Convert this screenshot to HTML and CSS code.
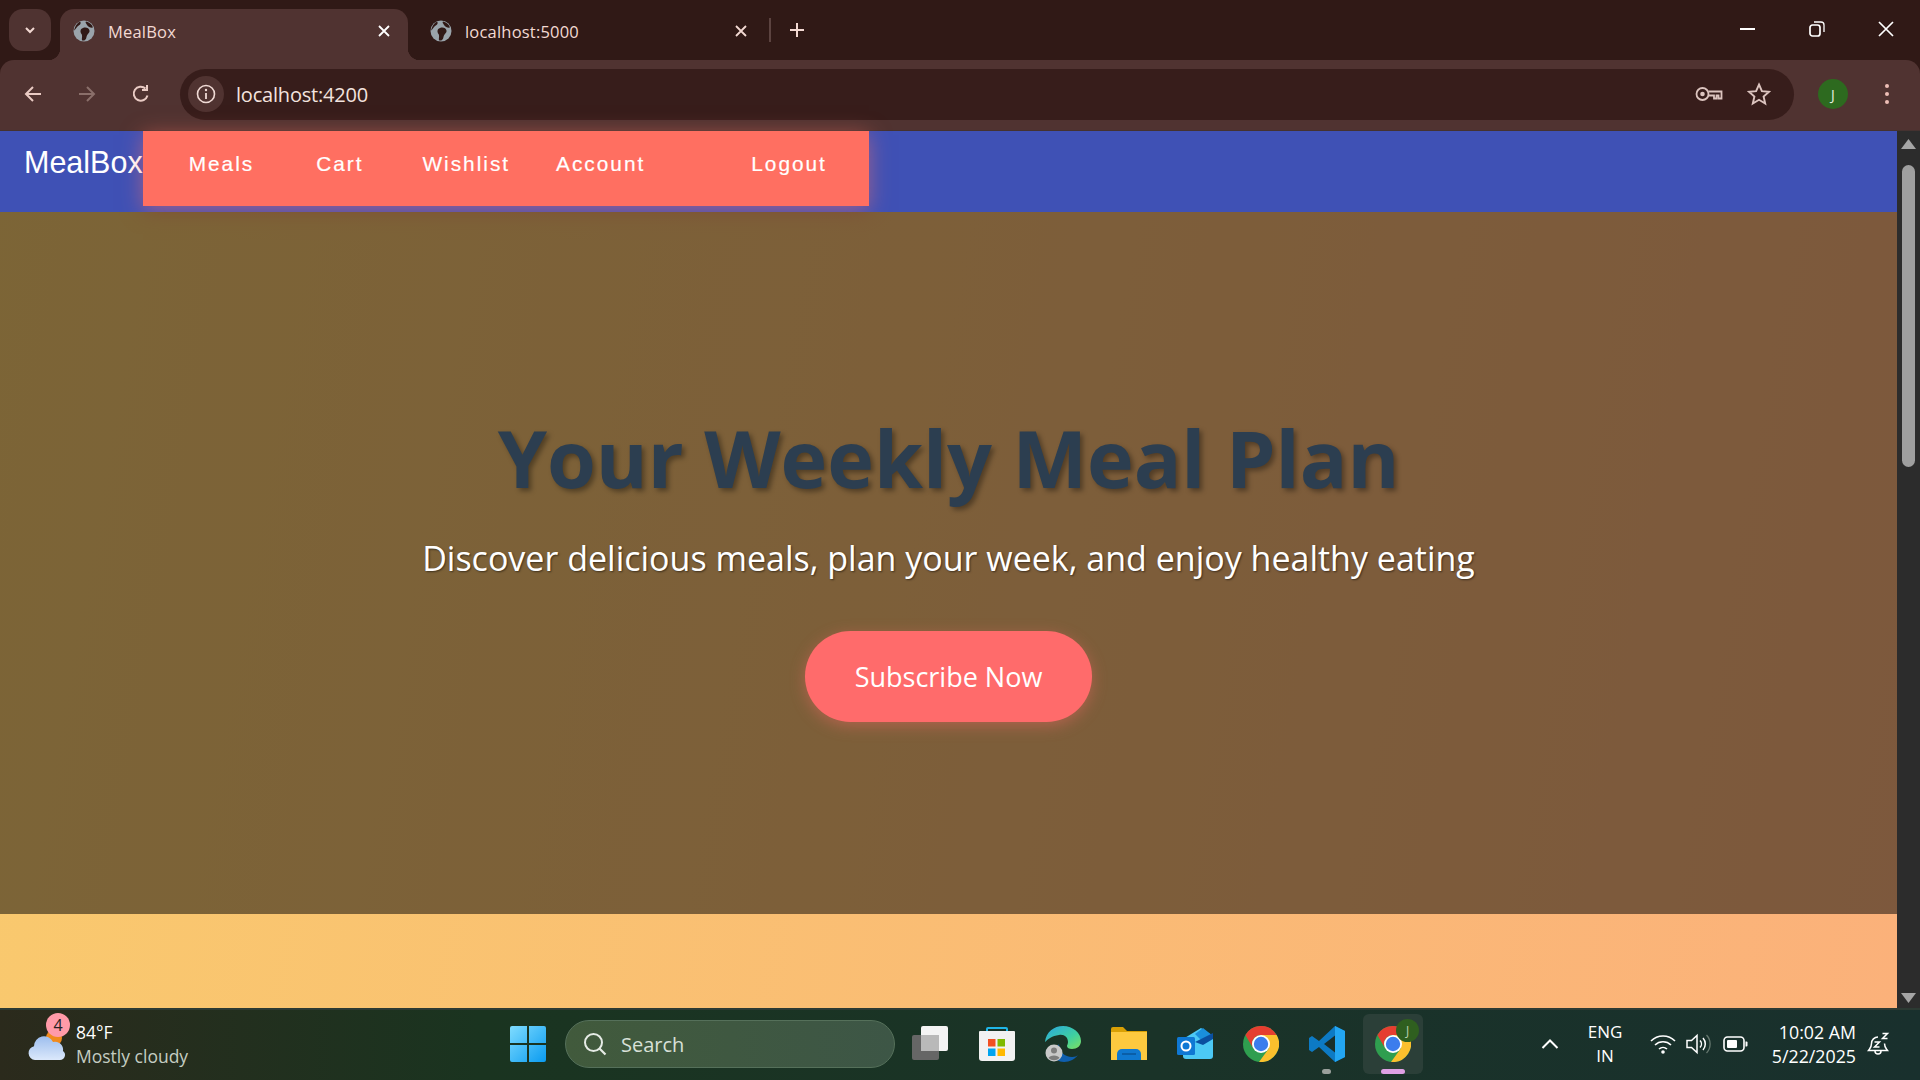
FILE: index.html
```html
<!DOCTYPE html>
<html lang="en">
  <head>
    <meta charset="UTF-8" />
    <title>MealBox</title>
    <link rel="stylesheet" href="styles.css">
  </head>
  <body>
    <svg class="defs" width="0" height="0">
      <symbol id="globe" viewBox="0 0 22 22">
        <circle cx="11" cy="11" r="10.5" fill="#9aa4ab" />
        <path d="M7 1.500C9 4 6 5 4.500 6.500S2 10 1 10.500C2 6 4 3 7 1.500ZM10 8c3-1 6 0 6.500 2.500S14 14 13.500 17 11 21 9.500 20.500 10 16 8.500 14 7 9 10 8ZM13 1.500c3 .5 6 3 7 6-2 .5-5-.5-6-2.500s-2-2.500-1-3.500Z" fill="#301916" />
      </symbol>
      <symbol id="chrome" viewBox="0 0 36 36">
        <circle cx="18" cy="18" r="18" fill="#2f9e4f" />
        <path d="M18 9H33.600A18 18 0 0 1 16 35.900L25.800 22.500Z" fill="#fbc02d" />
        <path d="M2.400 9L10.200 22.500A9 9 0 0 1 18 9H33.600A18 18 0 0 0 2.400 9Z" fill="#e53e30" />
        <circle cx="18" cy="18" r="9" fill="#fff" />
        <circle cx="18" cy="18" r="7.200" fill="#3b7ded" />
      </symbol>
    </svg>

    <div class="tabstrip">
      <button class="tab-search">
        <svg width="14" height="14" viewBox="0 0 14 14"><path d="M3 5l4 4 4-4" fill="none" stroke="#f3d9d3" stroke-width="2" /></svg>
      </button>
      <div class="tab tab-active">
        <svg class="favicon"><use href="#globe" /></svg>
        <span class="tab-title">MealBox</span>
        <svg class="tab-close" width="12" height="12" viewBox="0 0 12 12"><path d="M1 1l10 10M11 1L1 11" stroke="#fff" stroke-width="1.800" /></svg>
      </div>
      <div class="tab">
        <svg class="favicon"><use href="#globe" /></svg>
        <span class="tab-title">localhost:5000</span>
        <svg class="tab-close" width="12" height="12" viewBox="0 0 12 12"><path d="M1 1l10 10M11 1L1 11" stroke="#f3d9d3" stroke-width="1.800" /></svg>
      </div>
      <span class="tab-divider"></span>
      <svg class="tab-new" width="16" height="16" viewBox="0 0 16 16"><path d="M8 1v14M1 8h14" stroke="#f3d9d3" stroke-width="2" /></svg>
      <div class="window-controls">
        <svg width="16" height="16" viewBox="0 0 16 16"><path d="M0 8h15" stroke="#fff" stroke-width="2" /></svg>
        <svg width="16" height="16" viewBox="0 0 16 16"><rect x="1" y="4" width="10" height="11" rx="2.500" fill="none" stroke="#fff" stroke-width="1.700" /><path d="M5 1h7a3 3 0 0 1 3 3v7" fill="none" stroke="#fff" stroke-width="1.300" /></svg>
        <svg width="16" height="16" viewBox="0 0 16 16"><path d="M1 1l14 14M15 1L1 15" stroke="#fff" stroke-width="1.700" /></svg>
      </div>
    </div>

    <div class="toolbar">
      <svg class="tool-icon" width="20" height="20" viewBox="0 0 20 20"><path d="M18 10H3M10 3l-7 7 7 7" fill="none" stroke="#eacbc4" stroke-width="2" /></svg>
      <svg class="tool-icon" width="20" height="20" viewBox="0 0 20 20"><path d="M2 10h15M10 3l7 7-7 7" fill="none" stroke="#8a6f6a" stroke-width="2" /></svg>
      <svg class="tool-icon" width="20" height="20" viewBox="0 0 20 20"><path d="M16.500 11.500A7 7 0 1 1 14.500 4.500M16 1v5h-5" fill="none" stroke="#eacbc4" stroke-width="2" /></svg>
      <div class="omnibox">
        <span class="site-info">
          <svg width="20" height="20" viewBox="0 0 20 20"><circle cx="10" cy="10" r="8.500" fill="none" stroke="#f0dad5" stroke-width="1.600" /><path d="M10 9v6" stroke="#f0dad5" stroke-width="1.800" /><circle cx="10" cy="6" r="1.200" fill="#f0dad5" /></svg>
        </span>
        <span class="url">localhost:4200</span>
        <svg class="key" width="28" height="16" viewBox="0 0 28 16"><circle cx="7.500" cy="8" r="6" fill="none" stroke="#dcc4bf" stroke-width="1.800" /><circle cx="7.500" cy="8" r="2.300" fill="#dcc4bf" /><path d="M13.500 5.500h13v7h-3v-3h-2v3h-2.500v-3h-5.500" fill="none" stroke="#dcc4bf" stroke-width="1.800" /></svg>
        <svg class="star" width="24" height="24" viewBox="0 0 24 24"><path d="M12 2.500l2.900 6.600 7.100.7-5.400 4.700 1.600 7-6.200-3.700-6.200 3.700 1.600-7L2 9.800l7.100-.7Z" fill="none" stroke="#dcc4bf" stroke-width="1.900" /></svg>
      </div>
      <span class="profile">J</span>
      <span class="kebab"><i></i><i></i><i></i></span>
    </div>

    <div class="viewport">
      <div class="page">
        <nav class="navbar">
          <a class="brand">MealBox</a>
          <ul class="nav-links">
            <li class="nav-meals">Meals</li>
            <li class="nav-cart">Cart</li>
            <li class="nav-wishlist">Wishlist</li>
            <li class="nav-account">Account</li>
            <li class="nav-logout">Logout</li>
          </ul>
        </nav>
        <section class="hero">
          <h1>Your Weekly Meal Plan</h1>
          <p>Discover delicious meals, plan your week, and enjoy healthy eating</p>
          <button class="cta">Subscribe Now</button>
        </section>
        <div class="band"></div>
      </div>
      <div class="scrollbar">
        <svg class="arrow" width="15" height="12" viewBox="0 0 15 12"><path d="M7.500 1L15 11H0Z" fill="#a5a5a5" /></svg>
        <div class="track"><div class="thumb"></div></div>
        <svg class="arrow" width="15" height="12" viewBox="0 0 15 12"><path d="M7.500 11L15 1H0Z" fill="#a5a5a5" /></svg>
      </div>
    </div>

    <div class="taskbar">
      <div class="weather">
        <svg class="weather-icon" width="40" height="36" viewBox="0 0 40 36">
          <defs><linearGradient id="cloud" x1="0" y1="0" x2="0" y2="1"><stop offset="0" stop-color="#9dbeee" /><stop offset="1" stop-color="#dbe8fb" /></linearGradient></defs>
          <circle cx="27" cy="12" r="8" fill="#f08a1d" />
          <path d="M8 34a7 7 0 0 1-1-13.800A10 10 0 0 1 26 16a8 8 0 0 1 10 9A5 5 0 0 1 33 34Z" fill="url(#cloud)" />
        </svg>
        <span class="weather-badge">4</span>
        <div class="weather-text">
          <span class="temp">84°F</span>
          <span class="cond">Mostly cloudy</span>
        </div>
      </div>

      <svg class="start" width="36" height="36" viewBox="0 0 36 36">
        <defs>
          <linearGradient id="win" x1="0" y1="0" x2="1" y2="1"><stop offset="0" stop-color="#7fdcff" /><stop offset="1" stop-color="#0a9bf0" /></linearGradient>
        </defs>
        <path d="M2 0H17V17H0V2A2 2 0 0 1 2 0ZM19 0H34A2 2 0 0 1 36 2V17H19ZM0 19H17V36H2A2 2 0 0 1 0 34ZM19 19H36V34A2 2 0 0 1 34 36H19Z" fill="url(#win)" />
      </svg>

      <div class="searchbox">
        <svg width="24" height="24" viewBox="0 0 24 24"><circle cx="10.500" cy="10.500" r="8.500" fill="none" stroke="#e6ece6" stroke-width="2" /><path d="M16.500 16.500l6 6" stroke="#e6ece6" stroke-width="2.200" /></svg>
        <span>Search</span>
      </div>

      <div class="task-items">
        <div class="task-btn">
          <svg width="38" height="36" viewBox="0 0 38 36"><rect x="0" y="9" width="27" height="25" rx="2" fill="#666" /><rect x="9" y="0" width="27" height="25" rx="2" fill="#f4f4f4" /><rect x="9" y="9" width="18" height="16" fill="#b9b9b9" /></svg>
        </div>
        <div class="task-btn">
          <svg width="36" height="36" viewBox="0 0 36 36"><path d="M8 8V3a1 1 0 0 1 1-1h18a1 1 0 0 1 1 1v5" fill="none" stroke="#1fb6e8" stroke-width="2" /><path d="M1 5h34a1 1 0 0 1 1 1v26a3 3 0 0 1-3 3H3a3 3 0 0 1-3-3V6a1 1 0 0 1 1-1Z" fill="#f2f2f2" /><rect x="9" y="13" width="7.500" height="7.500" fill="#f25022" /><rect x="18.500" y="13" width="7.500" height="7.500" fill="#7fba00" /><rect x="9" y="22.500" width="7.500" height="7.500" fill="#00a4ef" /><rect x="18.500" y="22.500" width="7.500" height="7.500" fill="#ffb900" /></svg>
        </div>
        <div class="task-btn">
          <svg width="36" height="36" viewBox="0 0 36 36">
            <defs><linearGradient id="edge" x1="0" y1="0" x2="1" y2="1"><stop offset="0" stop-color="#2aa6e0" /><stop offset=".6" stop-color="#3fd0a0" /><stop offset="1" stop-color="#7fe060" /></linearGradient></defs>
            <path d="M0 16C1 6 9 0 18 0c10 0 18 7 18 15 0 5-4 8-9 8-3 0-5-1-5-3 0-1 1-2 1-4 0-5-4-8-9-7-7 1-11 4-14 7Z" fill="url(#edge)" />
            <path d="M14 18c0 8 6 13 13 13 3 0 5-1 6-2-3 4-8 7-14 7-3 0-5-1-7-2-2-5-1-12 2-16Z" fill="#0f5fae" />
            <circle cx="9" cy="27" r="8.500" fill="#c9c9c9" /><circle cx="9" cy="24.500" r="3" fill="#7d7d7d" /><path d="M3.500 32c1-3.500 10-3.500 11 0a8 8 0 0 1-11 0Z" fill="#7d7d7d" />
          </svg>
        </div>
        <div class="task-btn">
          <svg width="36" height="34" viewBox="0 0 36 34"><path d="M0 2a2 2 0 0 1 2-2h10l4 4h20v8H0Z" fill="#d9a005" /><path d="M0 5h36v28H0Z" fill="#fdc93f" /><path d="M6 33v-6a5 5 0 0 1 5-5h14a5 5 0 0 1 5 5v6Z" fill="#0f78cf" /><path d="M11 27h14" stroke="#0a569a" stroke-width="1.500" /></svg>
        </div>
        <div class="task-btn">
          <svg width="36" height="32" viewBox="0 0 36 32"><path d="M6 11L24 0l12 8v20a3 3 0 0 1-3 3H9a3 3 0 0 1-3-3Z" fill="#4cc9f5" /><path d="M18 6l8-6 10 8-10 6Z" fill="#1a8fdc" /><path d="M18 14l18-9v6l-10 6Z" fill="#0a4fa0" /><rect x="0" y="9" width="18" height="18" rx="1.500" fill="#0f78d4" /><circle cx="9" cy="18" r="4.500" fill="none" stroke="#fff" stroke-width="2" /></svg>
        </div>
        <div class="task-btn">
          <svg width="36" height="36"><use href="#chrome" /></svg>
        </div>
        <div class="task-btn">
          <svg width="36" height="36" viewBox="0 0 36 36"><path d="M26 0L36 5v26l-10 5L10 21 3 26 0 24V12l3-2 7 5Z" fill="#0d7ac4" /><path d="M26 0l10 5v26l-10 5Z" fill="#23a6f2" /><path d="M26 9.500L15 18l11 8.500Z" fill="#1a2f2a" /></svg>
          <span class="running"></span>
        </div>
        <div class="task-btn task-active">
          <svg width="36" height="36"><use href="#chrome" /></svg>
          <span class="task-avatar">J</span>
          <span class="running running-active"></span>
        </div>
      </div>

      <div class="tray">
        <svg class="chevron" width="18" height="12" viewBox="0 0 18 12"><path d="M1.500 10L9 2.500 16.500 10" fill="none" stroke="#fff" stroke-width="2" /></svg>
        <div class="lang"><span>ENG</span><span>IN</span></div>
        <svg class="wifi" width="26" height="20" viewBox="0 0 26 20"><path d="M1 7a17 17 0 0 1 24 0M5 11a11.500 11.500 0 0 1 16 0M9 15a6 6 0 0 1 8 0" fill="none" stroke="#fff" stroke-width="1.600" /><circle cx="13" cy="18" r="1.800" fill="#fff" /></svg>
        <svg class="volume" width="26" height="24" viewBox="0 0 26 24"><path d="M1 8.500h4.500L11 3.500v17l-5.500-5H1Z" fill="none" stroke="#fff" stroke-width="1.500" /><path d="M14 8.500a5 5 0 0 1 0 7M17 6a9 9 0 0 1 0 12" fill="none" stroke="#fff" stroke-width="1.500" /><path d="M20.500 3a13 13 0 0 1 0 18" fill="none" stroke="#66786f" stroke-width="1.300" /></svg>
        <svg class="battery" width="25" height="16" viewBox="0 0 25 16"><rect x="1" y="1" width="20" height="14" rx="3.500" fill="none" stroke="#fff" stroke-width="1.600" /><rect x="4" y="4" width="10" height="8" rx="1" fill="#fff" /><path d="M22.500 5.500h1a1 1 0 0 1 1 1v3a1 1 0 0 1-1 1h-1Z" fill="#fff" /></svg>
        <div class="clock"><span>10:02 AM</span><span>5/22/2025</span></div>
        <svg class="bell" width="24" height="24" viewBox="0 0 24 24"><path d="M12 5a6.500 6.500 0 0 0-6.500 6.500c0 4-1.500 5-3 7h19c-1.500-2-3-3-3-7" fill="none" stroke="#fff" stroke-width="1.500" /><path d="M9 19a3 3 0 0 0 6 0" fill="none" stroke="#fff" stroke-width="1.500" /><path d="M8.500 10h5l-5 5h5M16.500 1.500h5l-5 5h5" fill="none" stroke="#fff" stroke-width="1.500" /></svg>
      </div>
    </div>
  </body>
</html>
```

FILE: styles.css
```css
* {
  box-sizing: border-box;
}
body {
  margin: 0;
  height: 100vh;
  display: flex;
  flex-direction: column;
  overflow: hidden;
  font-family: "Open Sans", "Noto Sans", sans-serif;
  background: #301916;
}
.defs {
  position: absolute;
}

/* browser chrome */
.tabstrip {
  height: 60px;
  flex: none;
  display: flex;
  align-items: flex-start;
  padding: 9px 0 0 9px;
  background: #301916;
  color: #f3d9d3;
}
.tab-search {
  width: 42px;
  height: 42px;
  border: none;
  border-radius: 14px;
  background: #4f3331;
  display: flex;
  align-items: center;
  justify-content: center;
  margin-right: 9px;
}
.tab {
  position: relative;
  width: 348px;
  height: 51px;
  margin-right: 9px;
  padding: 0 18px 7px 13px;
  border-radius: 14px 14px 0 0;
  display: flex;
  align-items: center;
  gap: 13px;
  font-size: 16.500px;
}
.tab-active {
  background: #503331;
}
.tab-active::before,
.tab-active::after {
  content: "";
  position: absolute;
  bottom: 0;
  width: 12px;
  height: 12px;
}
.tab-active::before {
  left: -12px;
  background: radial-gradient(circle at 0 0, transparent 12px, #503331 12.500px);
}
.tab-active::after {
  right: -12px;
  background: radial-gradient(circle at 100% 0, transparent 12px, #503331 12.500px);
}
.favicon {
  width: 22px;
  height: 22px;
  flex: none;
}
.tab-title {
  flex: 1;
  letter-spacing: 0.2px;
}
.tab-divider {
  width: 2px;
  height: 24px;
  margin: 9px 18px 0 -5px;
  background: #5c4340;
}
.tab-new {
  margin-top: 13px;
}
.window-controls {
  margin-left: auto;
  display: flex;
  gap: 53px;
  padding: 12px 26px 0 0;
}

.toolbar {
  height: 71px;
  flex: none;
  display: flex;
  align-items: center;
  padding: 0 31px 2px 23px;
  background: #503331;
  border-radius: 14px 14px 0 0;
  border-bottom: 1px solid #453230;
}
.tool-icon {
  margin-right: 34px;
}
.tool-icon:nth-child(3) {
  margin-right: 29px;
}
.omnibox {
  flex: 1;
  height: 51px;
  display: flex;
  align-items: center;
  padding: 0 23px 0 8px;
  border-radius: 26px;
  background: #371d1b;
}
.site-info {
  width: 36px;
  height: 36px;
  border-radius: 50%;
  background: #503331;
  display: flex;
  align-items: center;
  justify-content: center;
  margin-right: 12px;
}
.url {
  flex: 1;
  font-size: 20px;
  letter-spacing: -0.2px;
  color: #f3e3df;
}
.key {
  margin-right: 24px;
}
.profile {
  width: 30px;
  height: 30px;
  margin: 0 37px 0 24px;
  border-radius: 50%;
  background: #2d6a1f;
  color: #e6efe2;
  font-size: 14px;
  display: flex;
  align-items: center;
  justify-content: center;
}
.kebab {
  display: flex;
  flex-direction: column;
  gap: 4px;
}
.kebab i {
  width: 4px;
  height: 4px;
  border-radius: 50%;
  background: #eebfb6;
}

/* the page */
.viewport {
  flex: 1;
  min-height: 0;
  display: flex;
}
.page {
  flex: 1;
  display: flex;
  flex-direction: column;
  background: linear-gradient(100deg, #f9ca6d, #fbb17a);
}
.navbar {
  height: 81px;
  flex: none;
  display: flex;
  align-items: flex-start;
  background: #3f51b5;
  font-family: "Liberation Sans", Arial, sans-serif;
  color: #fff;
}
.brand {
  font-size: 30.500px;
  padding: 14px 0 0 24px;
}
.nav-links {
  list-style: none;
  margin: 0;
  height: 75px;
  width: 726px;
  padding: 21px 0 0 46px;
  display: flex;
  align-items: flex-start;
  background: #ff6f61;
  box-shadow: 0 4px 20px rgba(255, 111, 97, 0.5);
  font-size: 20.800px;
  letter-spacing: 2px;
  -webkit-text-stroke: 0.2px #fff;
}
.nav-cart {
  margin-left: 62px;
}
.nav-wishlist {
  margin-left: 59px;
}
.nav-account {
  margin-left: 46px;
}
.nav-logout {
  margin-left: 106px;
}
.hero {
  height: 702px;
  flex: none;
  padding-top: 196px;
  display: flex;
  flex-direction: column;
  align-items: center;
  background: rgba(0, 0, 0, 0.5);
}
.hero h1 {
  margin: 0;
  font-size: 79px;
  line-height: 100px;
  font-weight: 700;
  color: #2c3e50;
  text-shadow: 3px 3px 5px rgba(0, 0, 0, 0.35);
}
.hero p {
  margin: 26px 0 0;
  font-size: 34px;
  line-height: 48px;
  color: #fff;
  text-shadow: 1px 1px 2px rgba(0, 0, 0, 0.5);
}
.cta {
  width: 287px;
  height: 91px;
  margin-top: 49px;
  border: none;
  border-radius: 50px;
  background: #ff6b6b;
  color: #fff;
  font-family: inherit;
  font-size: 27px;
  box-shadow: 0 4px 15px rgba(255, 107, 107, 0.4);
}
.band {
  flex: 1;
}
.scrollbar {
  width: 23px;
  flex: none;
  display: flex;
  flex-direction: column;
  align-items: center;
  padding: 7px 0 4px;
  background: #2c2c2c;
}
.track {
  flex: 1;
  width: 13px;
  padding-top: 15px;
}
.thumb {
  height: 302px;
  border-radius: 7px;
  background: #9f9f9f;
}

/* taskbar */
.taskbar {
  height: 72px;
  flex: none;
  display: flex;
  align-items: center;
  padding-bottom: 2px;
  border-top: 2px solid #2c3a33;
  background: linear-gradient(90deg, #2b2a1c, #1a3420 25%, #1a3328 60%, #19302d);
  color: #fff;
}
.weather {
  position: relative;
  width: 510px;
  flex: none;
  display: flex;
  align-items: center;
  padding-left: 27px;
}
.weather-icon {
  margin-right: 9px;
}
.weather-badge {
  position: absolute;
  left: 46px;
  top: -7px;
  width: 24px;
  height: 24px;
  border-radius: 50%;
  background: #ff9aa8;
  color: #222;
  font-size: 16px;
  text-align: center;
  line-height: 24px;
}
.weather-text {
  display: flex;
  flex-direction: column;
  font-size: 17.500px;
  line-height: 24px;
}
.cond {
  color: #c4cdc2;
}
.start {
  flex: none;
}
.searchbox {
  width: 330px;
  height: 48px;
  margin-left: 19px;
  padding-left: 17px;
  display: flex;
  align-items: center;
  gap: 14px;
  border-radius: 24px;
  border: 1px solid #55705a;
  background: linear-gradient(90deg, #415a3c, #3d5646);
  color: #d8e0d8;
  font-size: 20px;
}
.task-items {
  display: flex;
  gap: 6px;
  margin-left: 6px;
}
.task-btn {
  position: relative;
  width: 60px;
  height: 60px;
  display: flex;
  align-items: center;
  justify-content: center;
  border-radius: 6px;
}
.task-active {
  background: #2b3f38;
}
.running {
  position: absolute;
  left: 25px;
  bottom: 0;
  width: 9px;
  height: 5px;
  border-radius: 3px;
  background: #9aa09c;
}
.running-active {
  left: 18px;
  width: 24px;
  background: #dfa0e4;
}
.task-avatar {
  position: absolute;
  left: 33px;
  top: 5px;
  width: 23px;
  height: 23px;
  border-radius: 50%;
  background: #2f5f1f;
  color: #b9d0ae;
  font-size: 12px;
  text-align: center;
  line-height: 23px;
}
.tray {
  flex: 1;
  display: flex;
  align-items: center;
  padding-left: 118px;
}
.chevron {
  margin-right: 28px;
}
.lang {
  width: 36px;
  margin-right: 27px;
  display: flex;
  flex-direction: column;
  align-items: center;
  font-size: 17px;
  line-height: 24px;
}
.wifi {
  margin-right: 10px;
}
.volume {
  margin-right: 11px;
}
.clock {
  width: 108px;
  display: flex;
  flex-direction: column;
  align-items: flex-end;
  font-size: 17.800px;
  line-height: 24px;
}
.bell {
  margin-left: 10px;
}
```
